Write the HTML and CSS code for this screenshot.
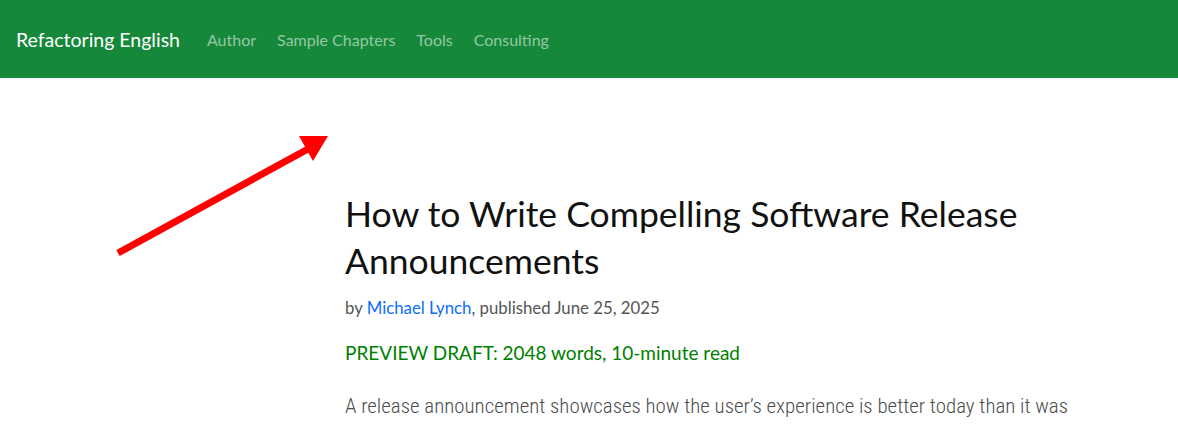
FILE: index.html
```html
<!DOCTYPE html>
<html>
<head>
<meta charset="utf-8">
<link rel="stylesheet" href="styles.css">
</head>
<body>
<nav class="navbar">
  <a class="brand" href="#">Refactoring English</a>
  <ul class="nav-links">
    <li><a href="#">Author</a></li>
    <li><a href="#">Sample Chapters</a></li>
    <li><a href="#">Tools</a></li>
    <li><a href="#">Consulting</a></li>
  </ul>
</nav>
<svg class="arrow" width="240" height="140" viewBox="100 120 240 140" xmlns="http://www.w3.org/2000/svg">
  <line x1="118" y1="253" x2="308" y2="149" stroke="#ff0000" stroke-width="7"/>
  <polygon points="299,136 328,136 313,161" fill="#ff0000"/>
</svg>
<main class="article">
  <h1 class="title">How to Write Compelling Software Release Announcements</h1>
  <p class="byline">by <a href="#">Michael Lynch</a>, published June 25, 2025</p>
  <p class="preview">PREVIEW DRAFT: 2048 words, 10-minute read</p>
  <p class="lead">A release announcement showcases how the user’s experience is better today than it was yesterday.</p>
</main>
</body>
</html>
```
FILE: styles.css
```css
html, body {
  margin: 0;
  padding: 0;
  background: #fff;
  overflow: hidden;
}
body {
  font-family: "Lato", "Open Sans", sans-serif;
  width: 1178px;
  height: 425px;
  position: relative;
}
.navbar {
  height: 78px;
  background: #15883a;
  display: flex;
  align-items: center;
  padding: 0 16px;
  box-sizing: border-box;
}
.brand {
  color: #fff;
  text-decoration: none;
  font-size: 19.5px;
  margin-right: 27px;
}
.nav-links {
  display: flex;
  list-style: none;
  margin: 0;
  padding: 0;
  gap: 21px;
}
.nav-links a {
  color: rgba(255, 255, 255, 0.55);
  text-decoration: none;
  font-size: 16px;
}
.arrow {
  position: absolute;
  left: 100px;
  top: 120px;
}
.article {
  margin-left: 345px;
  width: 740px;
  padding-top: 112px;
}
.title {
  font-size: 35.5px;
  font-weight: 400;
  line-height: 47px;
  color: #111;
  margin: 0 0 12px;
}
.byline {
  font-size: 16.8px;
  color: #555;
  margin: 0 0 20px;
  line-height: 24px;
}
.byline a {
  color: #0d6efd;
  text-decoration: none;
}
.preview {
  font-size: 19px;
  color: #008000;
  margin: 0 0 22px;
  line-height: 26px;
}
.lead {
  font-family: "Roboto Condensed", "Lato", sans-serif;
  font-weight: 300;
  font-size: 20.9px;
  color: #4d4d4d;
  margin: 0;
  line-height: 36px;
}
```
